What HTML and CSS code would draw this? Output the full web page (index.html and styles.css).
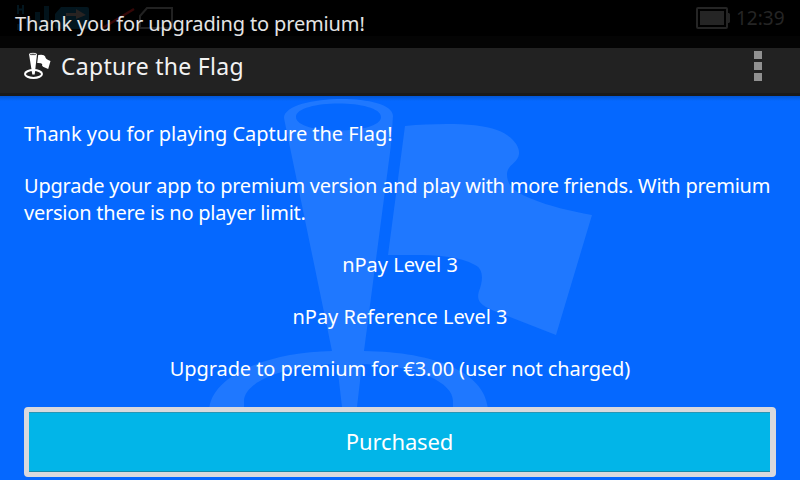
FILE: index.html
```
<!DOCTYPE html>
<html lang="en">
<head>
<meta charset="utf-8">
<title>Capture the Flag</title>
<link rel="stylesheet" href="styles.css">
</head>
<body>
<div class="screen">
  <div class="status">
    <svg class="status-icons" width="180" height="36" viewBox="0 0 180 36">
      <path d="M18 5v9M23 5v9M18 9.500h5" fill="none" stroke="#03161f" stroke-width="2"/>
      <path d="M17 24h5v6h-5zM26 18h5v12h-5zM35 12h5v18h-5zM44 6h5v24h-5z" fill="#02131b"/>
      <path d="M61 7h26q2 0 2 2v17q0 3-3 3H58q-3 0-3-3V14z" fill="#03161f"/>
      <path d="M66 13h10V9l10 6-10 4v-3H66z" fill="#282322"/>
      <path d="M101 29L134 9" stroke="#350707" stroke-width="2.500"/>
      <path d="M147 8h25v20h-32V16z" fill="none" stroke="#222" stroke-width="2"/>
    </svg>
    <span class="toast">Thank you for upgrading to premium!</span>
    <svg class="battery" width="34" height="22" viewBox="0 0 34 22">
      <rect x="1" y="1" width="30" height="20" rx="1" fill="none" stroke="#252525" stroke-width="2"/>
      <path d="M4 4h24v14H4zM32 6h1l1 1v8l-1 1h-1z" fill="#252525"/>
    </svg>
    <span class="clock">12:39</span>
  </div>
  <header class="bar">
    <svg class="logo" width="28" height="28" viewBox="0 0 28 28">
      <ellipse cx="9.500" cy="22" rx="8.500" ry="3.900" fill="none" stroke="#fff" stroke-width="2"/>
      <path d="M5 2L8.300 22.500h2.400L13 2z" fill="#fff"/>
      <ellipse cx="9" cy="2.300" rx="3.800" ry="1" fill="#222" stroke="#fff" stroke-width=".9"/>
      <path d="M14.200 3q6-1 7 1.500 0 2.500 5.300 4.500l-2.300 8-5.200-2.200q-1.500-1-.8-2.800-1-1.200-5-1z" fill="#fff"/>
    </svg>
    <h1 class="title">Capture the Flag</h1>
    <div class="menu"><i></i><i></i><i></i></div>
  </header>
  <main class="content">
    <svg class="watermark" width="800" height="311" viewBox="0 96 800 311">
      <path fill="#1f78ff" fill-rule="evenodd" d="M284 118C284 94 393 92 393 116L391 145L364 351C440 352 488 375 488 412H453V401C453 383 420 366 362 364L357 407H342L337 364C280 366 244 383 244 401V412H209C209 378 264 352 332 351L286 128ZM296 117C296 135 381 135 381 117C381 99 296 99 296 117Z"/>
      <path fill="#1f78ff" d="M405 126C440 123 478 123 497 130C513 136 520 147 519 154C518 163 507 165 507 174C507 188 518 193 532 199C549 206 570 211 592 215L556 335L500 313C480 306 476 301 479 291C483 281 484 269 475 265C455 253 420 255 388 255Z"/>
    </svg>
    <p class="thanks">Thank you for playing Capture the Flag!</p>
    <p class="info">Upgrade your app to premium version and play with more friends. With premium<br>version there is no player limit.</p>
    <p class="center">nPay Level 3</p>
    <p class="center">nPay Reference Level 3</p>
    <p class="center price">Upgrade to premium for €3.00 (user not charged)</p>
    <button class="purchase">Purchased</button>
  </main>
</div>
</body>
</html>
```
FILE: styles.css
```
* { box-sizing: border-box; }
body { margin: 0; font-family: "Noto Sans", sans-serif; color: #fff; background: #0568ff; }
.screen { width: 800px; height: 480px; overflow: hidden; display: flex; flex-direction: column; }
.status { position: relative; height: 48px; flex: none; display: flex; align-items: flex-start; background: linear-gradient(#000 36px, #040404 36px); }
.status-icons { position: absolute; left: 0; top: 0; }
.toast { position: relative; margin-left: 15px; font-size: 20px; line-height: 48px; letter-spacing: -.15px; color: #e4e4e4; white-space: nowrap; }
.battery { margin: 7px 6px 0 auto; }
.clock { width: 50px; margin-right: 14px; font-size: 19px; line-height: 36px; color: #252525; }
.bar { height: 48px; flex: none; display: flex; background: linear-gradient(#222 45px, #1a1a1a 45px); }
.logo { margin: 4px 0 0 24px; }
.title { margin: 0 0 0 9px; font-size: 23px; font-weight: 400; line-height: 36px; letter-spacing: .27px; color: #f3f3f3; white-space: nowrap; }
.menu { margin: 3px 38px 0 auto; width: 8px; display: flex; flex-direction: column; gap: 3px; }
.menu i { height: 8px; background: #919191; }
.content { position: relative; flex: 1; padding: 24px 24px 3px; background: linear-gradient(#0357d6, #0568ff 5px); }
.watermark { position: absolute; left: 0; top: 0; }
.content p { position: relative; margin: 0 0 25px; font-size: 20px; line-height: 27px; white-space: nowrap; }
.content .thanks { letter-spacing: -.03px; }
.content .info { letter-spacing: -.23px; }
.content .price { letter-spacing: -.09px; }
.center { text-align: center; }
.purchase { position: relative; display: block; width: 752px; height: 70px; padding: 0 0 2px; border: 5px solid #d9d9dd; border-right-width: 6px; border-radius: 4px; background: #02b5e8; box-shadow: inset 0 -1px #168aaa, inset 0 1px #2796b5; color: #fff; font: 22px "Noto Sans", sans-serif; letter-spacing: -.1px; }
```
